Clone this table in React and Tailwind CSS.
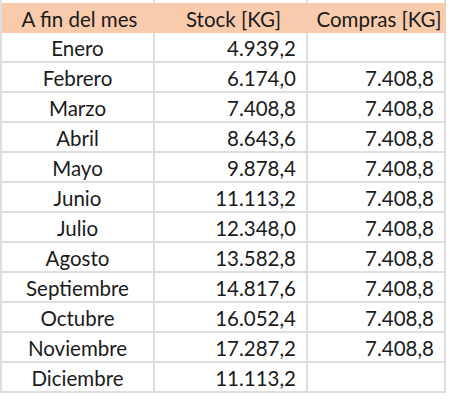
const rows = [
  ["Enero", "4.939,2", ""],
  ["Febrero", "6.174,0", "7.408,8"],
  ["Marzo", "7.408,8", "7.408,8"],
  ["Abril", "8.643,6", "7.408,8"],
  ["Mayo", "9.878,4", "7.408,8"],
  ["Junio", "11.113,2", "7.408,8"],
  ["Julio", "12.348,0", "7.408,8"],
  ["Agosto", "13.582,8", "7.408,8"],
  ["Septiembre", "14.817,6", "7.408,8"],
  ["Octubre", "16.052,4", "7.408,8"],
  ["Noviembre", "17.287,2", "7.408,8"],
  ["Diciembre", "11.113,2", ""],
];

export default function App() {
  return (
    <div
      className="w-[452px] h-[402px] bg-white overflow-hidden text-[#1b1b1b] text-[20.5px]"
      style={{ fontFamily: "Lato, 'Open Sans', sans-serif" }}
    >
      <div className="w-[446px]">
        <div className="grid grid-cols-[155px_153px_138px] h-[3px]">
          <div className="border-l-2 border-r-2 border-[#dedede]" />
          <div className="border-r-2 border-[#dedede]" />
          <div className="border-r-2 border-[#dedede]" />
        </div>
        <div className="grid grid-cols-[155px_153px_138px] h-[30px] bg-[#f8cbad] border-l-2 border-[#dedede]">
          <div className="flex items-center justify-center leading-none pt-[2px]">A fin del mes</div>
          <div className="flex items-center justify-center leading-none pt-[2px]">Stock [KG]</div>
          <div className="flex items-center justify-center leading-none pt-[2px]">Compras [KG]</div>
        </div>
        {rows.map((r) => (
          <div key={r[0]} className="grid grid-cols-[155px_153px_138px] h-[30px]">
            <div className="flex items-center justify-center pt-[3px] border-l-2 border-r-2 border-b-2 border-[#dedede] leading-none">
              {r[0]}
            </div>
            <div className="flex items-center justify-end pt-[3px] pr-[10px] border-r-2 border-b-2 border-[#dedede] leading-none">
              {r[1]}
            </div>
            <div className="flex items-center justify-end pt-[3px] pr-[10px] border-r-2 border-b-2 border-[#dedede] leading-none">
              {r[2]}
            </div>
          </div>
        ))}
      </div>
    </div>
  );
}
